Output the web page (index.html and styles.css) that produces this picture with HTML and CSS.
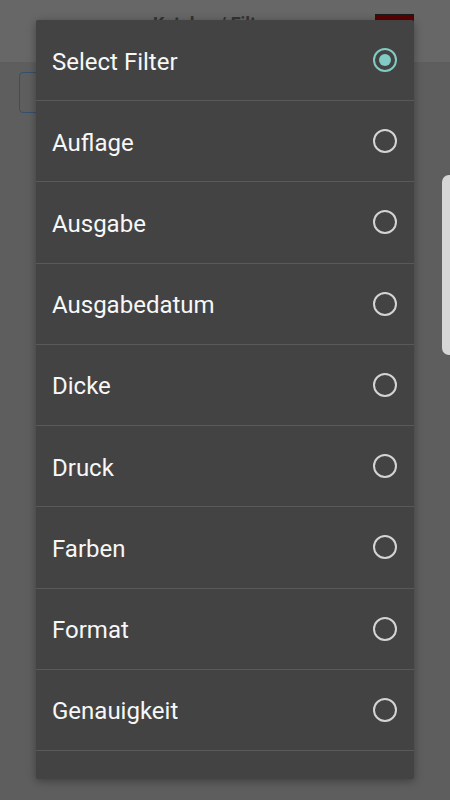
FILE: index.html
```html
<!DOCTYPE html>
<html lang="en">
<head>
  <meta charset="UTF-8" />
  <meta name="viewport" content="width=device-width, initial-scale=1" />
  <title>Katalog Filter</title>
  <link rel="stylesheet" href="styles.css">
</head>
<body>

  <!-- Dimmed screen behind the dialog -->
  <header class="appbar">
    <span class="appbar-title">Katalog / Filter</span>
    <span class="color-box"></span>
  </header>

  <div class="screen">
    <div class="field"></div>
    <div class="side-card"></div>
  </div>

  <!-- Filter picker dialog -->
  <div class="dialog">
    <ul class="options">
      <li class="option selected"><span class="label">Select Filter</span> <span class="radio"></span></li>
      <li class="option"><span class="label">Auflage</span> <span class="radio"></span></li>
      <li class="option"><span class="label">Ausgabe</span> <span class="radio"></span></li>
      <li class="option"><span class="label">Ausgabedatum</span> <span class="radio"></span></li>
      <li class="option"><span class="label">Dicke</span> <span class="radio"></span></li>
      <li class="option"><span class="label">Druck</span> <span class="radio"></span></li>
      <li class="option"><span class="label">Farben</span> <span class="radio"></span></li>
      <li class="option"><span class="label">Format</span> <span class="radio"></span></li>
      <li class="option"><span class="label">Genauigkeit</span> <span class="radio"></span></li>
      <li class="option"></li>
    </ul>
  </div>

</body>
</html>
```

FILE: styles.css
```css
/* Basic reset */
body {
  margin: 0;
  width: 450px;
  height: 800px;
  overflow: hidden;
  background-color: #5e5e5e;
  font-family: Roboto, "Noto Sans", sans-serif;
  position: relative;
}

/* App bar behind the scrim */
.appbar {
  height: 62px;
  background-color: #676767;
  display: flex;
  align-items: flex-start;
  justify-content: space-between;
  padding: 0 36px 0 153px;
  box-sizing: border-box;
}
.appbar-title {
  margin-top: 13px;
  font-size: 18px;
  font-weight: bold;
  color: #333;
}
.color-box {
  margin-top: 14px;
  width: 37px;
  height: 30px;
  background-color: #5a0000;
  border: 1px solid #1a1a1a;
}

/* Content behind the scrim */
.screen {
  display: flex;
  justify-content: space-between;
  align-items: flex-start;
  padding: 10px 0 0 19px;
}
.field {
  width: 40px;
  height: 39px;
  border: 1px solid #34506e;
  border-radius: 4px;
}
.side-card {
  margin-top: 103px;
  width: 8px;
  height: 180px;
  background-color: #d6d6d6;
  border-radius: 7px 0 0 7px;
}

/* Dialog */
.dialog {
  position: absolute;
  top: 20px;
  left: 36px;
  width: 378px;
  height: 759px;
  background-color: #434343;
  border-radius: 2px;
  box-shadow: 0 2px 8px rgba(0,0,0,0.35);
  overflow: hidden;
}
.options {
  list-style: none;
  margin: 0;
  padding: 0;
}
.option {
  height: 80.25px;
  border-bottom: 1px solid #595959;
  display: flex;
  align-items: center;
  justify-content: space-between;
  padding: 0 17px 0 16px;
  color: #f7f7f7;
  font-size: 24px;
}
.option:first-child {
  height: 80px;
}
.label {
  padding-top: 3px;
}

/* Radio buttons */
.radio {
  width: 20px;
  height: 20px;
  border: 2px solid #d4d4d4;
  border-radius: 50%;
  position: relative;
}
.selected .radio {
  border-color: #80cbc4;
}
.selected .radio::after {
  content: "";
  position: absolute;
  top: 4px;
  left: 4px;
  width: 12px;
  height: 12px;
  border-radius: 50%;
  background-color: #80cbc4;
}
```
